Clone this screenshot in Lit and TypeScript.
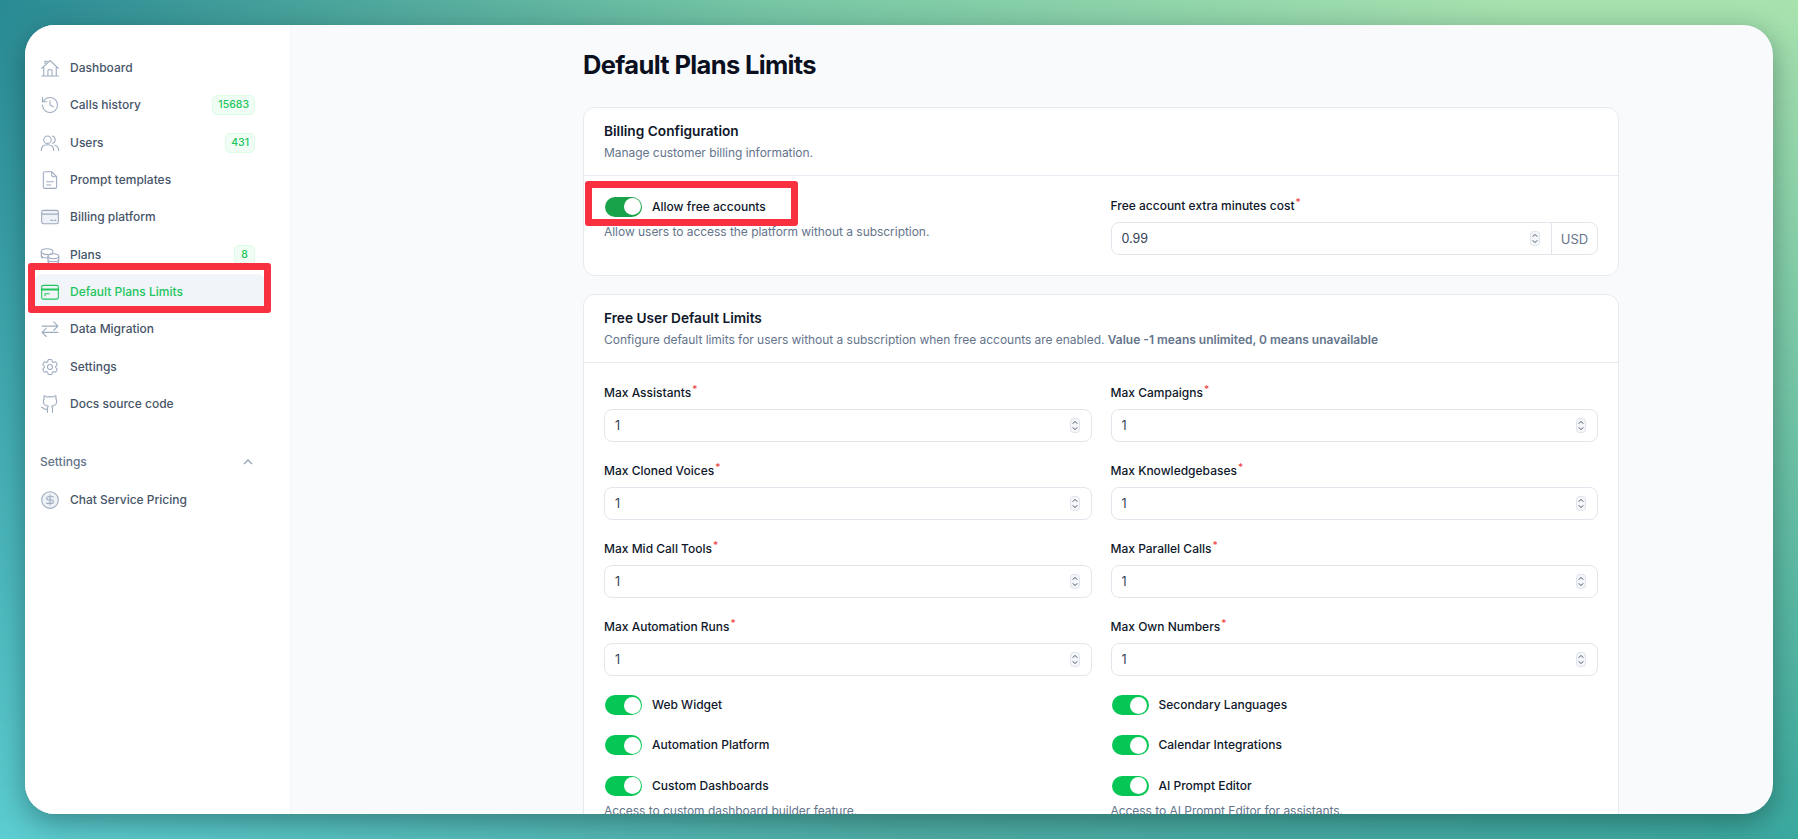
import { LitElement, html, css, svg } from 'lit';
import { customElement } from 'lit/decorators.js';

const ICONS: Record<string, unknown> = {
  home: svg`<path d="M2 21.5h20M4.5 21.5V11M19.5 21.5V11M2 12.5 12 3l10 9.5M9.5 21.5V15a1 1 0 0 1 1-1h3a1 1 0 0 1 1 1v6.5M6 6.5V4h2.5"/>`,
  history: svg`<path d="M3 12a9 9 0 1 0 9-9 9.75 9.75 0 0 0-6.74 2.74L3 8"/><path d="M3 3v5h5"/><path d="M12 7v5l4 2"/>`,
  users: svg`<circle cx="9" cy="8" r="4.5"/><path d="M1.5 21c0-4.5 3.2-7 7.5-7s7.5 2.5 7.5 7"/><path d="M15 3.7a4.5 4.5 0 0 1 0 8.6M18 14.6c2.6 1 4.5 3.4 4.5 6.4"/>`,
  file: svg`<path d="M14 2H6a2 2 0 0 0-2 2v16a2 2 0 0 0 2 2h12a2 2 0 0 0 2-2V8z"/><path d="M14 2v4a2 2 0 0 0 2 2h4M8 14h8M8 18h5"/>`,
  billing: svg`<rect x="2" y="4" width="20" height="16" rx="2" fill="#eef1f6"/><path d="M2 8.5h20M13 16h2M17 16h2"/>`,
  coins: svg`<ellipse cx="8.5" cy="8" rx="7" ry="3.5"/><path d="M1.5 8v4c0 1.9 3.1 3.5 7 3.5M1.5 12v1.5c0 .8.6 1.5 1.5 2"/><ellipse cx="16" cy="13.5" rx="6.5" ry="3"/><path d="M9.5 13.5v6c0 1.7 2.9 3 6.5 3s6.5-1.3 6.5-3v-6M9.5 17c0 1.7 2.9 3 6.5 3s6.5-1.3 6.5-3"/>`,
  card: svg`<rect x="2" y="4" width="20" height="16.5" rx="2"/><path d="M2 9h20" stroke-width="2.2"/><path d="M6 16.5V14h5"/>`,
  swap: svg`<path d="M2.5 8.5H21M16.5 3.5 21.5 8.5l-5 5M21.5 16H3M7.5 11 2.5 16l5 5"/>`,
  cog: svg`<path d="M9.594 3.94c.09-.542.56-.94 1.11-.94h2.593c.55 0 1.02.398 1.11.94l.213 1.281c.063.374.313.686.645.87.074.04.147.083.22.127.325.196.72.257 1.075.124l1.217-.456a1.125 1.125 0 0 1 1.37.49l1.296 2.247a1.125 1.125 0 0 1-.26 1.431l-1.003.827c-.293.241-.438.613-.43.992a7.723 7.723 0 0 1 0 .255c-.008.378.137.75.43.991l1.004.827c.424.35.534.955.26 1.43l-1.298 2.247a1.125 1.125 0 0 1-1.369.491l-1.217-.456c-.355-.133-.75-.072-1.076.124a6.47 6.47 0 0 1-.22.128c-.331.183-.581.495-.644.869l-.213 1.281c-.09.543-.56.94-1.11.94h-2.594c-.55 0-1.019-.398-1.11-.94l-.213-1.281c-.062-.374-.312-.686-.644-.87a6.52 6.52 0 0 1-.22-.127c-.325-.196-.72-.257-1.076-.124l-1.217.456a1.125 1.125 0 0 1-1.369-.49l-1.297-2.247a1.125 1.125 0 0 1 .26-1.431l1.004-.827c.292-.24.437-.613.43-.991a6.932 6.932 0 0 1 0-.255c.007-.38-.138-.751-.43-.992l-1.004-.827a1.125 1.125 0 0 1-.26-1.43l1.297-2.247a1.125 1.125 0 0 1 1.37-.491l1.216.456c.356.133.751.072 1.076-.124.072-.044.146-.086.22-.128.332-.183.582-.495.644-.869l.214-1.28Z"/><circle cx="12" cy="12" r="3"/>`,
  github: svg`<path d="M15 22v-4a4.8 4.8 0 0 0-1-3.5c3 0 6-2 6-5.5.08-1.25-.27-2.48-1-3.5.28-1.15.28-2.35 0-3.5 0 0-1 0-3 1.5-2.64-.5-5.36-.5-8 0C6 2 5 2 5 2c-.3 1.15-.3 2.35 0 3.5A5.403 5.403 0 0 0 4 9c0 3.5 3 5.5 6 5.5-.39.49-.68 1.05-.85 1.65-.17.6-.22 1.23-.15 1.85v4"/><path d="M9 18c-4.51 2-5-2-7-2"/>`,
  dollar: svg`<circle cx="12" cy="12" r="10" fill="#eef1f6"/><path d="M16 8h-6a2 2 0 1 0 0 4h4a2 2 0 1 1 0 4H8M12 18V6"/>`,
};

const NAV = [
  { icon: 'home', label: 'Dashboard' },
  { icon: 'history', label: 'Calls history', badge: '15683' },
  { icon: 'users', label: 'Users', badge: '431' },
  { icon: 'file', label: 'Prompt templates' },
  { icon: 'billing', label: 'Billing platform' },
  { icon: 'coins', label: 'Plans', badge: '8' },
  { icon: 'card', label: 'Default Plans Limits', active: true },
  { icon: 'swap', label: 'Data Migration' },
  { icon: 'cog', label: 'Settings' },
  { icon: 'github', label: 'Docs source code' },
];

const LIMITS = [
  'Max Assistants', 'Max Campaigns',
  'Max Cloned Voices', 'Max Knowledgebases',
  'Max Mid Call Tools', 'Max Parallel Calls',
  'Max Automation Runs', 'Max Own Numbers',
];

const FEATURES = [
  { label: 'Web Widget' },
  { label: 'Secondary Languages' },
  { label: 'Automation Platform' },
  { label: 'Calendar Integrations' },
  { label: 'Custom Dashboards', desc: 'Access to custom dashboard builder feature.' },
  { label: 'AI Prompt Editor', desc: 'Access to AI Prompt Editor for assistants.' },
];

@customElement('app-root')
export class AppRoot extends LitElement {
  static styles = css`
    :host {
      display: block;
      position: relative;
      height: 100vh;
      padding: 25px;
      box-sizing: border-box;
      overflow: hidden;
      background: linear-gradient(90deg, #2a8b95 0%, #76c6a5 42%, #a8e2af 85%);
      font-family: Inter, 'Liberation Sans', sans-serif;
      font-size: 12px;
      line-height: 20px;
    }
    /* bottom half of the backdrop, faded in over the top one */
    :host::before {
      content: '';
      position: absolute;
      inset: 0;
      background: linear-gradient(90deg, #5ccdd1 0%, #4fada6 50%, #3aa89f 100%);
      -webkit-mask-image: linear-gradient(180deg, transparent 0%, #000 100%);
      mask-image: linear-gradient(180deg, transparent 0%, #000 100%);
    }
    .window {
      position: relative;
      display: flex;
      height: 100%;
      border-radius: 30px;
      overflow: hidden;
      background: #f9fafc;
      box-shadow: 0 8px 28px rgba(0, 30, 30, 0.38);
    }
    .sidebar {
      flex: 0 0 266px;
      box-sizing: border-box;
      padding: 25px 26px 0 10px;
      background: #fff;
      border-right: 1px solid #f1f4f8;
    }
    .nav {
      display: flex;
      flex-direction: column;
      gap: 1.33px;
    }
    .item {
      position: relative;
      display: flex;
      align-items: center;
      height: 36px;
      padding: 0 9px 0 5px;
      border-radius: 6px;
      color: #475569;
      font-weight: 450;
    }
    .item.active {
      background: #f1f5f9;
      color: #22c55e;
      font-weight: 500;
    }
    .item svg {
      flex: none;
      width: 20px;
      height: 20px;
      margin: 0 10.5px 0 -0.5px;
      fill: none;
      stroke: #9dabbf;
      stroke-width: 1.3;
      stroke-linecap: round;
      stroke-linejoin: round;
    }
    .item.active svg {
      stroke: #22c55e;
    }
    .badge {
      margin-left: auto;
      min-width: 9px;
      padding: 0 5px;
      border: 1px solid #dcfce7;
      border-radius: 5px;
      background: #f0fdf4;
      color: #22c55e;
      font-size: 10.5px;
      line-height: 18px;
      text-align: center;
    }
    .mark {
      position: absolute;
      box-sizing: border-box;
      border: 7px solid #f9303f;
      border-radius: 3px;
      pointer-events: none;
    }
    .item .mark {
      top: -11px;
      left: -7px;
      right: -7px;
      bottom: -3px;
    }
    .section {
      display: flex;
      align-items: center;
      justify-content: space-between;
      height: 36px;
      margin: 22px 0 2px;
      padding: 0 11px 0 5px;
      color: #64748b;
      font-weight: 450;
    }
    .section svg {
      width: 10px;
      height: 6px;
      fill: none;
      stroke: #94a3b8;
      stroke-width: 1.3;
    }
    .main {
      flex: 1;
      min-width: 0;
      overflow: hidden;
      padding: 23px 154px 0 292px;
    }
    h1 {
      margin: 0 0 25px;
      color: #0b1020;
      font-size: 25.5px;
      line-height: 34px;
      font-weight: 700;
      letter-spacing: -0.65px;
    }
    .card {
      margin-bottom: 17.5px;
      border: 1px solid #e7eaf0;
      border-radius: 12px;
      background: #fff;
    }
    .card-head {
      padding: 13px 20px 12px;
      border-bottom: 1px solid #e7eaf0;
    }
    .card-head h2 {
      margin: 0 0 2px;
      color: #0f172a;
      font-size: 13.7px;
      line-height: 20px;
      font-weight: 600;
    }
    .muted {
      margin: 0;
      color: #64748b;
      font-size: 12px;
      line-height: 20px;
      letter-spacing: -0.04px;
    }
    .muted b {
      font-weight: 600;
      letter-spacing: 0;
    }
    .grid {
      display: grid;
      grid-template-columns: 1fr 1fr;
      gap: 19px;
      padding: 20px;
    }
    .label {
      display: block;
      margin-bottom: 6px;
      color: #0f172a;
      font-weight: 450;
    }
    .label i {
      position: relative;
      top: -4px;
      margin-left: 1px;
      color: #ef4444;
      font-size: 10px;
      font-style: normal;
      line-height: 0;
    }
    .field {
      display: flex;
      align-items: center;
      height: 33px;
      box-sizing: border-box;
      border: 1px solid #e2e6ec;
      border-radius: 8px;
      background: #fff;
    }
    .field input {
      flex: 1;
      min-width: 0;
      padding: 0 10px;
      border: 0;
      outline: 0;
      background: none;
      color: #334155;
      font: 400 12.5px Inter, 'Liberation Sans', sans-serif;
    }
    .field svg {
      flex: none;
      width: 10px;
      height: 15px;
      margin-right: 11px;
      fill: none;
      stroke-linecap: round;
      stroke-linejoin: round;
    }
    .unit {
      align-self: stretch;
      display: flex;
      align-items: center;
      justify-content: center;
      width: 45px;
      border-left: 1px solid #e2e6ec;
      color: #64748b;
      font-size: 13px;
    }
    .toggle-row {
      position: relative;
      display: flex;
      align-items: center;
      min-height: 21.3px;
      gap: 10px;
      color: #0f172a;
      font-weight: 450;
    }
    .toggle {
      position: relative;
      flex: none;
      width: 37px;
      height: 20px;
      margin-left: 1px;
      border-radius: 10px;
      background: #06c755;
    }
    .toggle.dark {
      background: #18a34a;
    }
    .toggle::after {
      content: '';
      position: absolute;
      top: 1.5px;
      right: 1.5px;
      width: 17px;
      height: 17px;
      border-radius: 50%;
      background: #fff;
    }
    .toggle-row .mark {
      top: -15px;
      left: -19.5px;
      width: 213px;
      height: 45px;
    }
    .toggle-row + .muted {
      margin-top: 5px;
    }
  `;

  renderNav(item: any) {
    return html`
      <div class="item ${item.active ? 'active' : ''}">
        <svg viewBox="0 0 24 24">${ICONS[item.icon]}</svg>
        ${item.label}
        ${item.badge ? html`<span class="badge">${item.badge}</span>` : ''}
        ${item.active ? html`<span class="mark"></span>` : ''}
      </div>
    `;
  }

  renderNumber(label: string, value: string, unit?: string) {
    return html`
      <div>
        <label class="label">${label}<i>*</i></label>
        <div class="field">
          <input type="text" .value=${value} aria-label=${label} />
          <svg viewBox="0 0 10 15">
            <rect x=".5" y=".5" width="9" height="14" rx="3" fill="#f4f6f9" stroke="#d9dee6" stroke-width=".8" />
            <path d="M3 5.4 5 3.4l2 2M3 9.6l2 2 2-2" stroke="#475569" stroke-width="1" />
          </svg>
          ${unit ? html`<span class="unit">${unit}</span>` : ''}
        </div>
      </div>
    `;
  }

  renderToggle(label: string, marked = false) {
    return html`
      <div class="toggle-row">
        <span class="toggle ${marked ? 'dark' : ''}" role="switch" aria-checked="true"></span>
        ${label}
        ${marked ? html`<span class="mark"></span>` : ''}
      </div>
    `;
  }

  render() {
    return html`
      <div class="window">
        <aside class="sidebar">
          <nav class="nav">${NAV.map((n) => this.renderNav(n))}</nav>
          <div class="section">
            Settings
            <svg viewBox="0 0 10 6"><path d="M1 5l4-4 4 4" /></svg>
          </div>
          ${this.renderNav({ icon: 'dollar', label: 'Chat Service Pricing' })}
        </aside>
        <main class="main">
          <h1>Default Plans Limits</h1>
          <section class="card">
            <header class="card-head">
              <h2>Billing Configuration</h2>
              <p class="muted">Manage customer billing information.</p>
            </header>
            <div class="grid">
              <div>
                ${this.renderToggle('Allow free accounts', true)}
                <p class="muted">Allow users to access the platform without a subscription.</p>
              </div>
              ${this.renderNumber('Free account extra minutes cost', '0.99', 'USD')}
            </div>
          </section>
          <section class="card">
            <header class="card-head">
              <h2>Free User Default Limits</h2>
              <p class="muted">
                Configure default limits for users without a subscription when free accounts are enabled.
                <b>Value -1 means unlimited, 0 means unavailable</b>
              </p>
            </header>
            <div class="grid">
              ${LIMITS.map((l) => this.renderNumber(l, '1'))}
              ${FEATURES.map(
                (f) => html`
                  <div>
                    ${this.renderToggle(f.label)}
                    ${f.desc ? html`<p class="muted">${f.desc}</p>` : ''}
                  </div>
                `
              )}
            </div>
          </section>
        </main>
      </div>
    `;
  }
}
